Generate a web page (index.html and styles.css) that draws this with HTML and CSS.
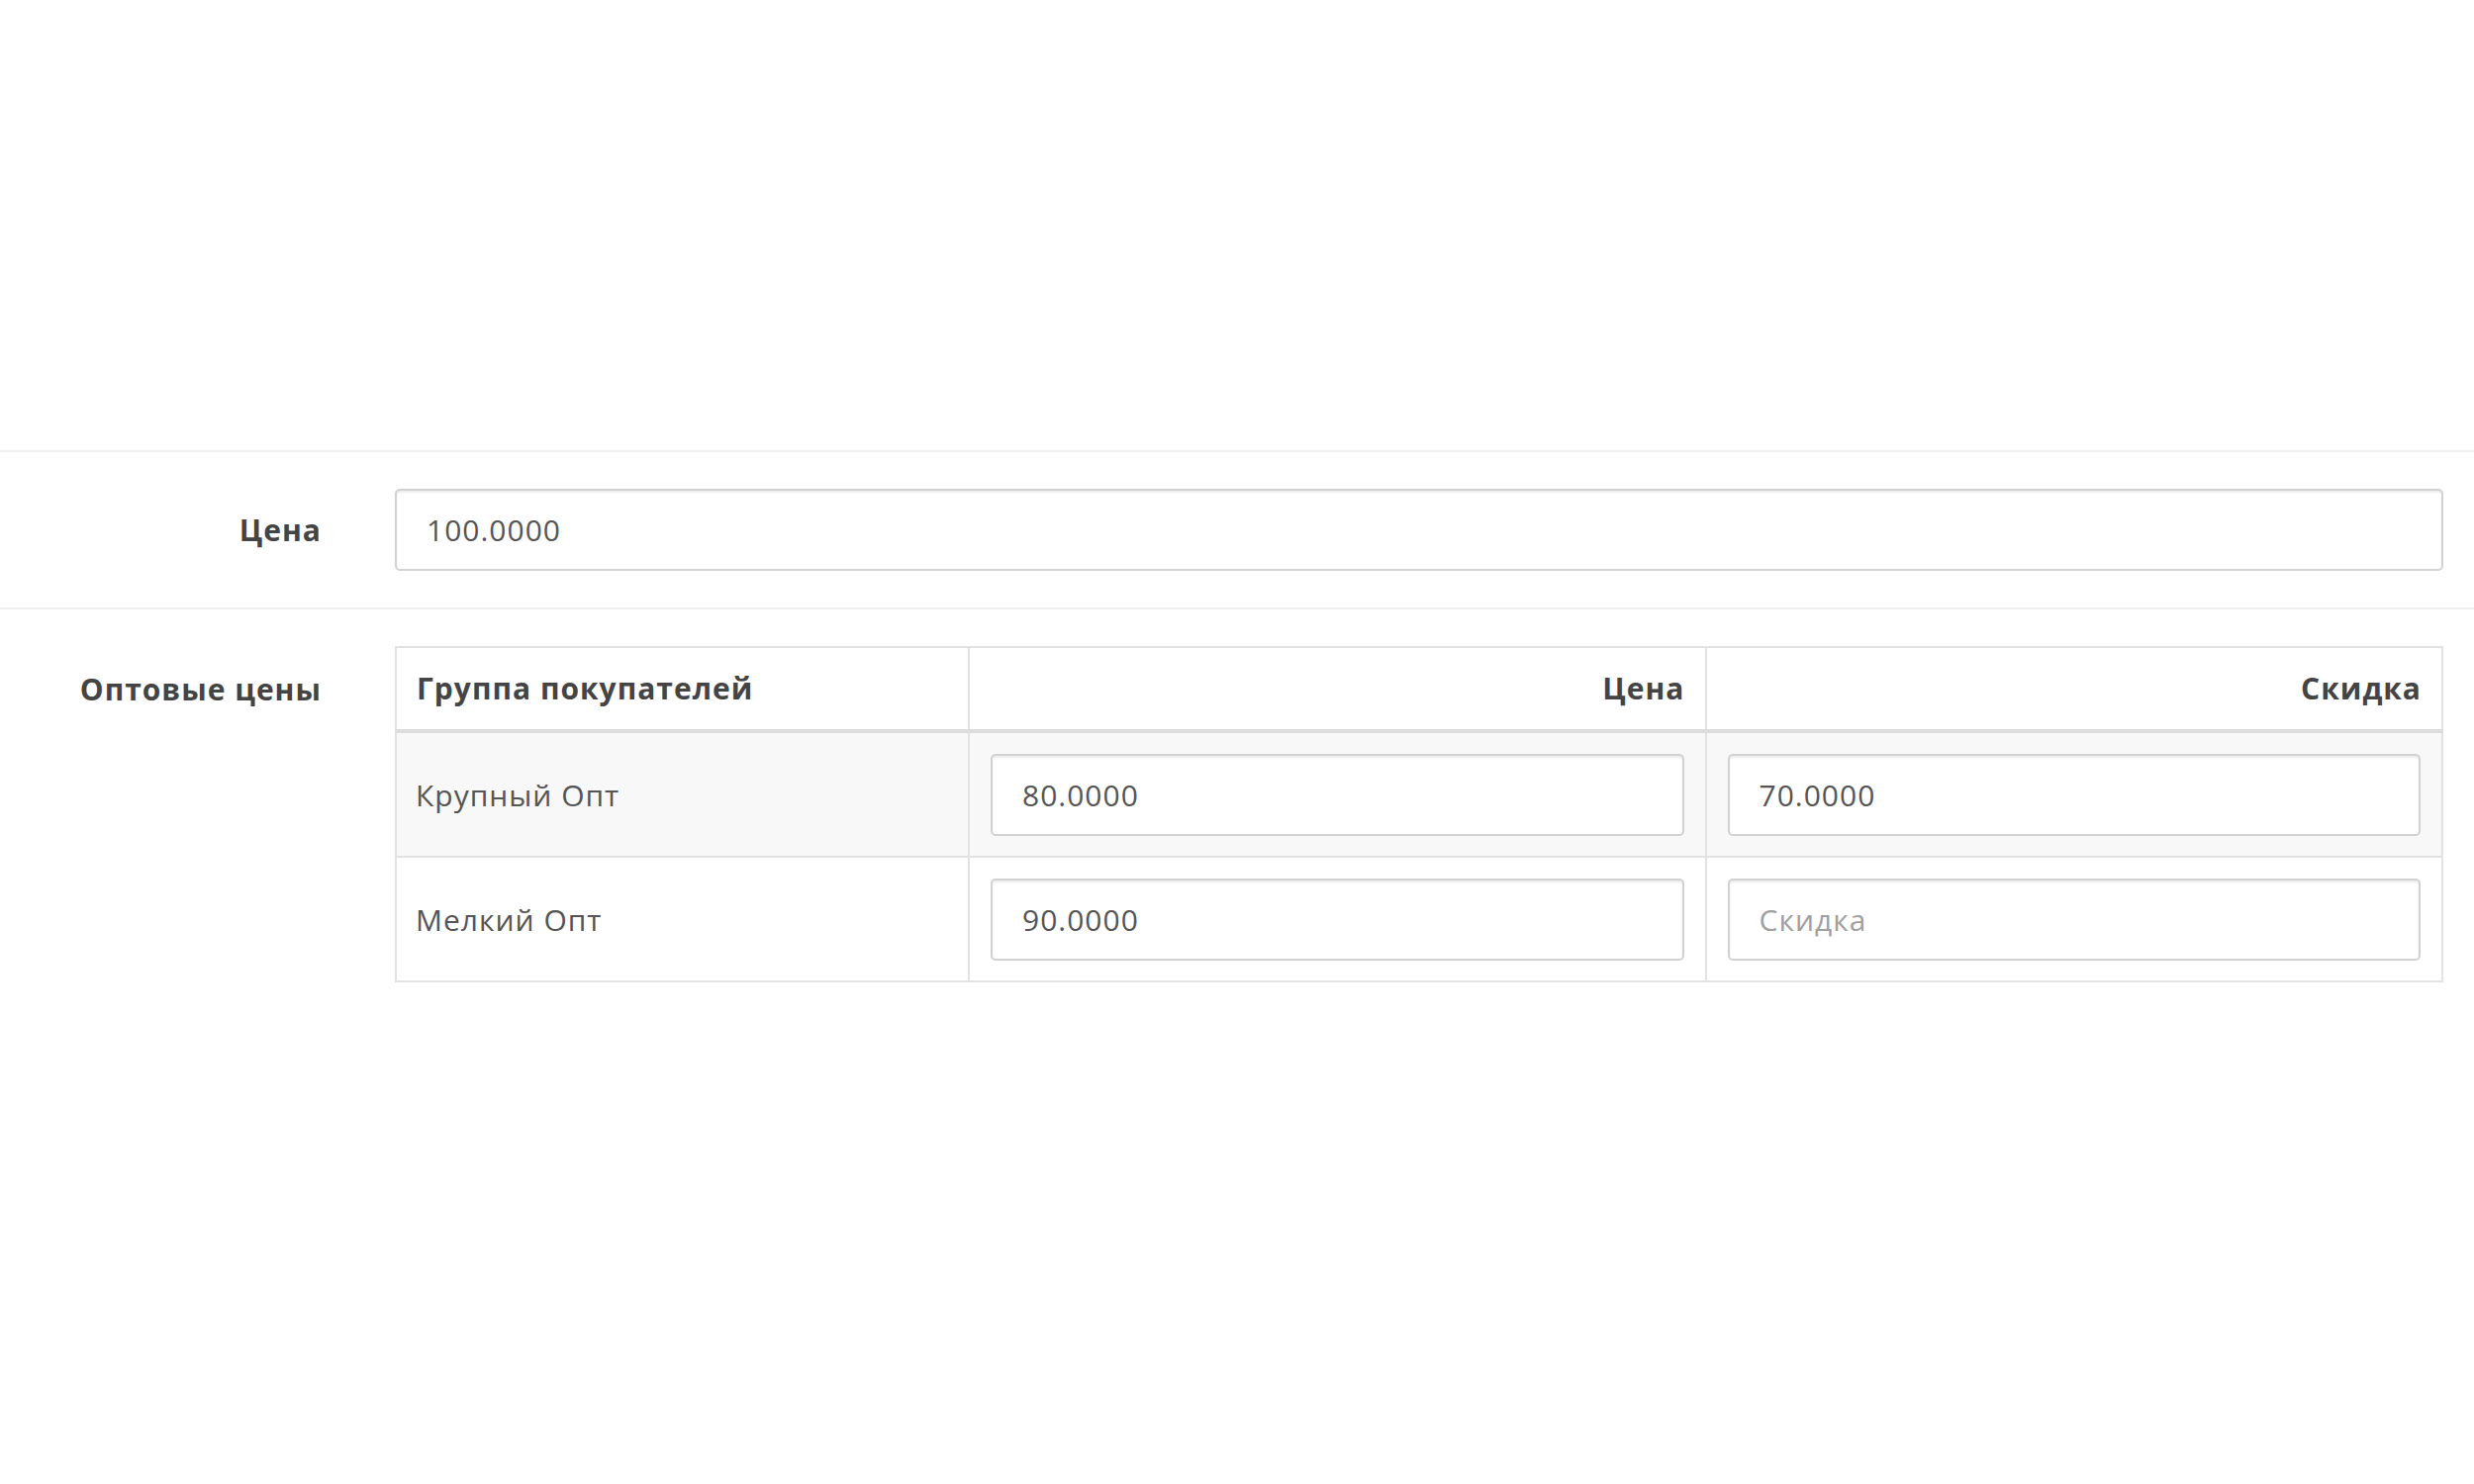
FILE: index.html
```html
<!DOCTYPE html>
<html lang="ru">
<head>
<meta charset="utf-8">
<title>Цены</title>
<link rel="stylesheet" href="styles.css">
</head>
<body>
<div class="page">
  <div class="top-space"></div>
  <div class="form-group">
    <label class="control-label">Цена</label>
    <div class="control">
      <input class="form-control" type="text" value="100.0000">
    </div>
  </div>
  <div class="form-group">
    <label class="control-label">Оптовые цены</label>
    <div class="control">
      <table class="price-table">
        <colgroup>
          <col class="c-group">
          <col class="c-price">
          <col class="c-discount">
        </colgroup>
        <thead>
          <tr>
            <th class="left">Группа покупателей</th>
            <th class="right">Цена</th>
            <th class="right">Скидка</th>
          </tr>
        </thead>
        <tbody>
          <tr class="striped">
            <td>Крупный Опт</td>
            <td><input class="form-control" type="text" value="80.0000"></td>
            <td><input class="form-control" type="text" value="70.0000"></td>
          </tr>
          <tr>
            <td>Мелкий Опт</td>
            <td><input class="form-control" type="text" value="90.0000"></td>
            <td><input class="form-control" type="text" placeholder="Скидка"></td>
          </tr>
        </tbody>
      </table>
    </div>
  </div>
</div>
</body>
</html>
```

FILE: styles.css
```css
html, body {
  margin: 0;
  padding: 0;
  background: #ffffff;
}

body {
  font-family: "Open Sans", "Noto Sans", sans-serif;
  font-size: 30px;
  letter-spacing: 1px;
  color: #555555;
}

.page {
  width: 2500px;
}

.top-space {
  height: 455px;
}

.form-group {
  display: flex;
  align-items: flex-start;
  border-top: 2px solid #efefef;
  padding: 37px 31px 37px 0;
}

.control-label {
  width: 325px;
  flex: 0 0 325px;
  margin-right: 74px;
  text-align: right;
  font-weight: 700;
  color: #444444;
  line-height: 83px;
}

.form-group + .form-group .control-label {
  line-height: 88px;
}

.control {
  flex: 1 1 auto;
  min-width: 0;
}

.form-control {
  display: block;
  box-sizing: border-box;
  width: 100%;
  height: 83px;
  margin: 0;
  padding: 0 30px;
  font-family: "Open Sans", "Noto Sans", sans-serif;
  font-size: 30px;
  letter-spacing: 1px;
  color: #555555;
  background: #ffffff;
  border: 2px solid #d2d2d2;
  border-radius: 5px;
  box-shadow: inset 0 2px 2px rgba(0, 0, 0, 0.08);
  outline: none;
}

.form-control::placeholder {
  color: #a0a0a0;
}

.price-table {
  width: 100%;
  table-layout: fixed;
  border-collapse: collapse;
  border: 2px solid #dddddd;
}

.c-group { width: 28%; }
.c-price { width: 36%; }
.c-discount { width: 36%; }

.price-table th,
.price-table td {
  border: 2px solid #e2e2e2;
}

.price-table th {
  padding: 21px 20px;
  line-height: 40px;
  font-weight: 700;
  color: #444444;
  border-bottom: 4px solid #dcdcdc;
}

.price-table th.left { text-align: left; }
.price-table th.right { text-align: right; }

.price-table td {
  padding: 21px 21px 20px 21px;
  vertical-align: middle;
}

.price-table td:first-child {
  padding-left: 19px;
}

.price-table tr.striped td {
  background: #f8f8f8;
}
```
